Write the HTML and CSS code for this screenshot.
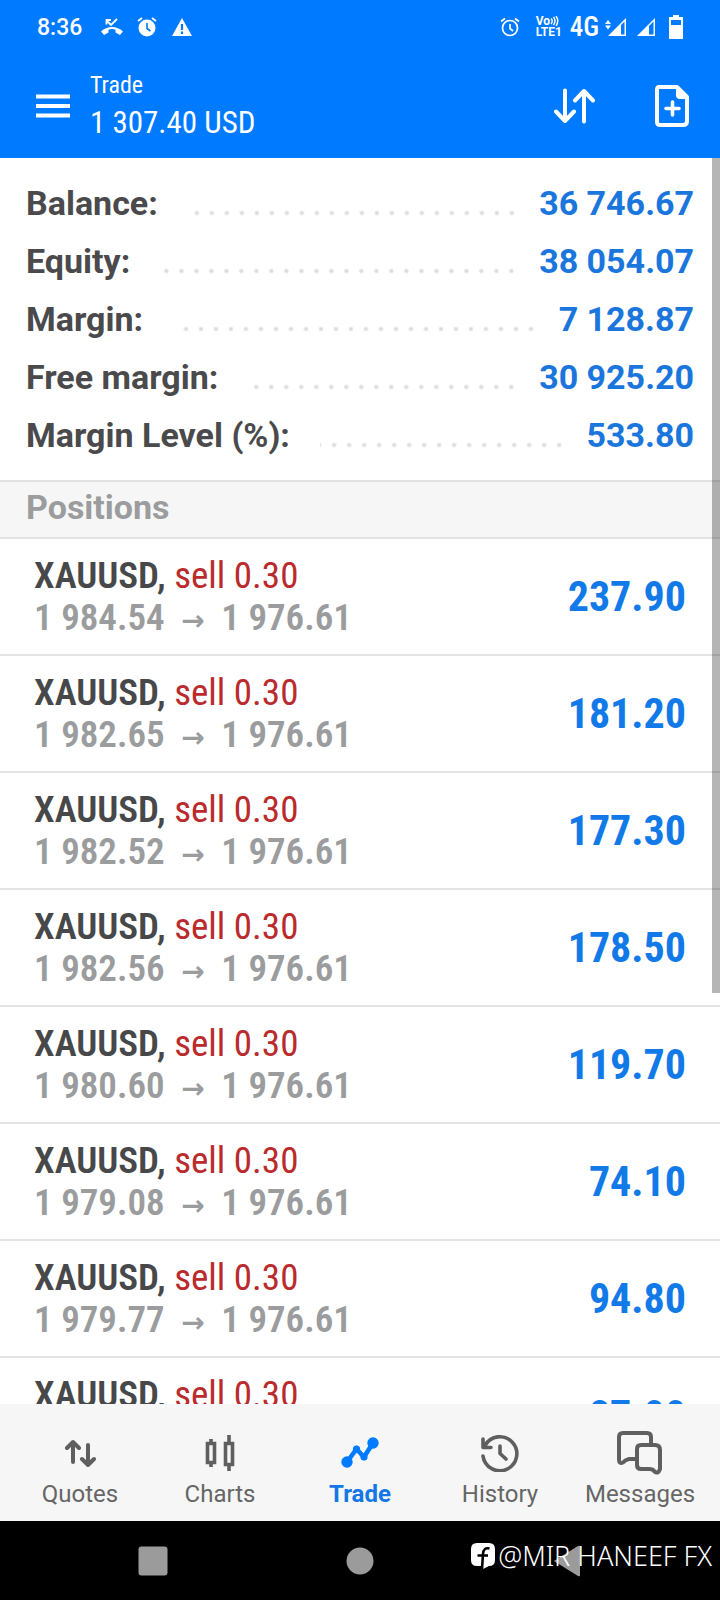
FILE: index.html
```html
<!DOCTYPE html>
<html lang="en">
<head>
<meta charset="utf-8">
<meta name="viewport" content="width=device-width, initial-scale=1">
<title>Trade</title>
<link rel="stylesheet" href="styles.css">
</head>
<body>
<div class="app">
  <header class="top">
    <div class="status">
      <span class="clock">8:36</span>
      <svg class="st-call" viewBox="0 0 24 20" width="24" height="20" fill="#fff"><path d="M1 14.500C7 8.500 17 8.500 23 14.500L20 18L15.500 15.500V12.700Q12 11.500 8.500 12.700V15.500L4 18Z"/><path d="M17 2L11 8L6.500 3.500M6.500 7.500V3H11" fill="none" stroke="#fff" stroke-width="1.800"/></svg>
      <svg class="st-alarm" viewBox="0 0 20 20" width="20" height="20"><circle cx="10" cy="11" r="8.500" fill="#fff"/><path d="M1 4L5 1M19 4L15 1" stroke="#fff" stroke-width="1.800"/><path d="M10 6V11.500L13.500 14" fill="none" stroke="#007aff" stroke-width="1.600"/></svg>
      <svg class="st-warn" viewBox="0 0 22 20" width="22" height="20"><path d="M11 1L21 19H1Z" fill="#fff"/><path d="M11 7V13M11 14.500V17" stroke="#007aff" stroke-width="2.200"/></svg>
      <span class="spacer"></span>
      <svg class="st-alarm2" viewBox="0 0 20 20" width="20" height="20" fill="none" stroke="#fff" stroke-width="1.700"><circle cx="10" cy="11" r="7.500"/><path d="M1 4.500L5 1.500M19 4.500L15 1.500M10 7V11.500L13 14"/></svg>
      <span class="volte"><span>Vo<svg viewBox="0 0 9 10" width="9" height="10" fill="none" stroke="#fff" stroke-width="1.400"><path d="M1 2.500Q3.500 5 1 8M3.500 1Q6.500 5 3.500 9M6 0Q9.500 5 6 10"/></svg></span><span>LTE1</span></span>
      <span class="net">4G</span>
      <svg class="st-sig1" viewBox="0 0 22 20" width="22" height="20" fill="#fff"><path d="M3 3L6 7H0ZM3 12.500L0 8.500H6Z"/><path d="M21 1V19H3Z"/><path d="M16 8L19.500 4.500V17.500H16Z" fill="#007aff"/></svg>
      <svg class="st-sig2" viewBox="0 0 20 20" width="20" height="20" fill="#fff"><path d="M19 1V19H1Z"/><path d="M13 9L17.500 4.500V17.500H13Z" fill="#007aff"/></svg>
      <svg class="st-bat" viewBox="0 0 16 24" width="16" height="24"><path d="M5 0H11V2H15V24H1V2H5Z" fill="#fff"/><path d="M3 5H13V10H3Z" fill="#007aff"/></svg>
    </div>
    <div class="toolbar">
      <button class="icon-btn" aria-label="Menu"><svg viewBox="0 0 34 24" width="34" height="24" stroke="#fff" stroke-width="4"><path d="M0 2.500H34M0 12H34M0 21.500H34"/></svg></button>
      <div class="heading">
        <h1 class="title">Trade</h1>
        <div class="profit">1 307.40 USD</div>
      </div>
      <button class="icon-btn sort" aria-label="Sort"><svg viewBox="0 0 42 36" width="42" height="36" fill="none" stroke="#fff" stroke-width="4" stroke-linecap="round" stroke-linejoin="round"><path d="M11 2.500V33M2 23.500L11 33L20 23.500M30 33.500V3M21 12.500L30 3L39 12.500"/></svg></button>
      <button class="icon-btn" aria-label="New order"><svg viewBox="0 0 36 42" width="36" height="42"><path d="M5 2H23L33 12V36Q33 40 29 40H6Q3 40 3 37V5Q3 2 5 2Z" fill="none" stroke="#fff" stroke-width="4" stroke-linejoin="round"/><path d="M22 1V10Q22 14 26 14H34Z" fill="#fff"/><path d="M18.500 17V30M12 23.500H25" stroke="#fff" stroke-width="3.600" stroke-linecap="round"/></svg></button>
    </div>
  </header>

  <main class="content">
    <dl class="summary">
      <div class="line"><dt>Balance:</dt><dd>36 746.67</dd></div>
      <div class="line"><dt>Equity:</dt><dd>38 054.07</dd></div>
      <div class="line"><dt>Margin:</dt><dd>7 128.87</dd></div>
      <div class="line"><dt>Free margin:</dt><dd>30 925.20</dd></div>
      <div class="line"><dt>Margin Level (%):</dt><dd>533.80</dd></div>
    </dl>
    <h2 class="section">Positions</h2>
    <ul class="positions">
      <li class="pos"><div><div class="sym">XAUUSD, <span class="side">sell 0.30</span></div><div class="price">1 984.54 <span class="arrow">→</span> 1 976.61</div></div><div class="gain">237.90</div></li>
      <li class="pos"><div><div class="sym">XAUUSD, <span class="side">sell 0.30</span></div><div class="price">1 982.65 <span class="arrow">→</span> 1 976.61</div></div><div class="gain">181.20</div></li>
      <li class="pos"><div><div class="sym">XAUUSD, <span class="side">sell 0.30</span></div><div class="price">1 982.52 <span class="arrow">→</span> 1 976.61</div></div><div class="gain">177.30</div></li>
      <li class="pos"><div><div class="sym">XAUUSD, <span class="side">sell 0.30</span></div><div class="price">1 982.56 <span class="arrow">→</span> 1 976.61</div></div><div class="gain">178.50</div></li>
      <li class="pos"><div><div class="sym">XAUUSD, <span class="side">sell 0.30</span></div><div class="price">1 980.60 <span class="arrow">→</span> 1 976.61</div></div><div class="gain">119.70</div></li>
      <li class="pos"><div><div class="sym">XAUUSD, <span class="side">sell 0.30</span></div><div class="price">1 979.08 <span class="arrow">→</span> 1 976.61</div></div><div class="gain">74.10</div></li>
      <li class="pos"><div><div class="sym">XAUUSD, <span class="side">sell 0.30</span></div><div class="price">1 979.77 <span class="arrow">→</span> 1 976.61</div></div><div class="gain">94.80</div></li>
      <li class="pos"><div><div class="sym">XAUUSD, <span class="side">sell 0.30</span></div><div class="price">1 979.51 <span class="arrow">→</span> 1 976.61</div></div><div class="gain">87.00</div></li>
    </ul>
    <div class="scrollbar"></div>
  </main>

  <nav class="tabs">
    <a class="tab" href="#quotes"><svg viewBox="0 0 32 28" width="32" height="28" fill="none" stroke="#5f5f5f" stroke-width="4" stroke-linecap="round" stroke-linejoin="round"><path d="M9 23V3M3 9L9 3L15 9M24 6V26M18 20L24 26L30 20"/></svg><span>Quotes</span></a>
    <a class="tab" href="#charts"><svg viewBox="0 0 30 36" width="30" height="36" fill="none" stroke="#5f5f5f" stroke-width="3.600"><path d="M2.500 8.500H9.500V27.500H2.500ZM6 4V8M6 28V32M20.500 8.500H27.500V29.500H20.500ZM24 0V8M24 30V36"/></svg><span>Charts</span></a>
    <a class="tab active" href="#trade" aria-current="page"><svg viewBox="0 0 38 32" width="38" height="32" fill="#007aff"><path d="M6 25L15.500 12L23 20L32 6" fill="none" stroke="#007aff" stroke-width="4.600"/><circle cx="6" cy="25" r="5.700"/><circle cx="15.500" cy="12" r="3.600"/><circle cx="23" cy="20" r="3.600"/><circle cx="32" cy="6" r="5.700"/></svg><span>Trade</span></a>
    <a class="tab" href="#history"><svg viewBox="0 0 38 38" width="38" height="38" fill="none" stroke="#5f5f5f" stroke-width="3.600" stroke-linecap="round" stroke-linejoin="round"><path d="M2 22A17 17 0 1 0 4 11.500M2 5V13.500H10M19 12V19.500L25 25"/></svg><span>History</span></a>
    <a class="tab" href="#messages"><svg viewBox="0 0 46 44" width="46" height="44" fill="none" stroke="#5f5f5f" stroke-width="4" stroke-linejoin="round"><path d="M18 28H12Q8 29 6 31.500Q2 33 2 29V6Q2 2 6 2H30Q34 2 34 6V13"/><path d="M24 14H38Q43 14 43 19V38Q41 44 37 40Q36 38 32 38H24Q20 38 20 34V18Q20 14 24 14Z"/></svg><span>Messages</span></a>
  </nav>

  <footer class="system">
    <button class="sys-btn" aria-label="Recent apps"><svg viewBox="0 0 30 30" width="30" height="30" fill="#9b9b9b"><rect x="0.500" y="0.500" width="29" height="29" rx="3"/></svg></button>
    <button class="sys-btn" aria-label="Home"><svg viewBox="0 0 28 28" width="28" height="28" fill="#9b9b9b"><circle cx="14" cy="14" r="13.500"/></svg></button>
    <button class="sys-btn" aria-label="Back"><svg viewBox="0 0 28 32" width="28" height="32" fill="#9b9b9b"><path d="M1 16L25 1Q27 0 27 2V30Q27 32 25 31Z"/></svg></button>
    <div class="watermark">
      <svg viewBox="0 0 26 28" width="26" height="28"><path d="M7 1H19Q25 1 25 7V18Q25 24 19 24L13 27L11.500 24H7Q1 24 1 18V7Q1 1 7 1Z" fill="#fff"/><path d="M19.500 6.500Q13.500 5 13 12L12 27M7.500 13.500H18" fill="none" stroke="#000" stroke-width="2.600"/></svg>
      <span>@MIR HANEEF FX</span>
    </div>
  </footer>
</div>
</body>
</html>
```
FILE: styles.css
```css
* { box-sizing: border-box; }

body {
  margin: 0;
  font-family: Roboto, "Liberation Sans", sans-serif;
  background: #fff;
}

h1, h2, dl, dd, ul { margin: 0; padding: 0; }
ul { list-style: none; }
svg { display: block; flex: none; }
button { border: 0; padding: 0; background: none; }

.app {
  display: flex;
  flex-direction: column;
  height: 100vh;
}

.top {
  flex: none;
  background: #007aff;
  color: #fff;
}

.status {
  display: flex;
  align-items: center;
  height: 54px;
  padding: 0 37px;
}
.clock { font-size: 23px; font-weight: 500; }
.st-call { margin-left: 18px; }
.st-alarm { margin-left: 13px; }
.st-warn { margin-left: 14px; }
.spacer { flex: 1; }
.volte {
  display: flex;
  flex-direction: column;
  width: 28px;
  margin-left: 16px;
  font-size: 12px;
  line-height: 11px;
  font-weight: 700;
}
.volte span { display: flex; }
.net {
  margin: 0 6px;
  font-family: "Roboto Condensed", Roboto, sans-serif;
  font-size: 27px;
  font-weight: 500;
}
.st-sig2 { margin-left: 9px; }
.st-bat { margin-left: 12px; margin-right: -1px; }

.toolbar {
  display: flex;
  align-items: center;
  height: 104px;
  padding: 0 30px 0 36px;
}
.icon-btn { flex: none; }
.heading {
  flex: 1;
  margin-left: 20px;
  font-family: "Roboto Condensed", Roboto, sans-serif;
}
.title {
  font-size: 24px;
  line-height: 34px;
  font-weight: 400;
}
.profit { font-size: 31px; line-height: 42px; }
.sort { margin-right: 58px; }

.content {
  position: relative;
  flex: 1;
  min-height: 0;
  overflow: hidden;
}

.summary { padding: 16px 26px; }
.line {
  display: flex;
  align-items: center;
  height: 58px;
  font-size: 34px;
  font-weight: 700;
  color: #4a4a4c;
}
.line::after {
  content: "";
  order: 1;
  flex: 1;
  height: 6px;
  margin: 20px 20px 0 30px;
  background: radial-gradient(circle, #dcdcdc 1px, transparent 3px) right center / 15px 6px repeat-x;
}
.line dd { order: 2; color: #1a76dc; }

.section {
  height: 59px;
  padding: 0 26px;
  border-top: 2px solid #e2e2e2;
  border-bottom: 2px solid #e2e2e2;
  background: #f6f6f6;
  color: #9b9c9e;
  font-size: 34px;
  line-height: 50px;
  font-weight: 700;
}

.pos {
  display: flex;
  align-items: center;
  justify-content: space-between;
  height: 117px;
  padding: 0 34px;
  border-bottom: 2px solid #e4e4e4;
  font-family: "Roboto Condensed", Roboto, sans-serif;
  font-weight: 600;
  font-size: 37px;
  line-height: 42px;
}
.sym { color: #47484a; }
.side { color: #b92b2c; font-weight: 400; }
.price { color: #9b9c9e; }
.arrow {
  margin: 0 8px;
  font-family: "Noto Sans", "DejaVu Sans", sans-serif;
  font-size: 28px;
  line-height: 28px;
}
.gain { color: #127ae8; font-size: 42px; font-weight: 700; }

.scrollbar {
  position: absolute;
  top: 0;
  right: 0;
  width: 8px;
  height: 67%;
  background: rgba(0, 0, 0, 0.29);
}

.tabs {
  flex: none;
  display: grid;
  grid-template-columns: repeat(5, 1fr);
  padding: 24px 10px 11px;
  background: #f6f6f6;
}
.tab {
  display: grid;
  grid-template-rows: 50px 32px;
  place-items: center;
  color: #666;
  font-size: 24px;
  line-height: 32px;
  text-decoration: none;
}
.active { color: #1377e6; font-weight: 700; }

.system {
  position: relative;
  flex: none;
  display: grid;
  grid-template-columns: repeat(3, 1fr);
  height: 79px;
  padding: 0 49px;
  background: #000;
}
.sys-btn { display: grid; place-items: center; }
.watermark {
  position: absolute;
  right: 8px;
  top: 15px;
  display: flex;
  align-items: center;
  gap: 2px;
  color: #fff;
  font-family: "Noto Sans", sans-serif;
  font-size: 27px;
  font-weight: 300;
  line-height: 40px;
}
```
